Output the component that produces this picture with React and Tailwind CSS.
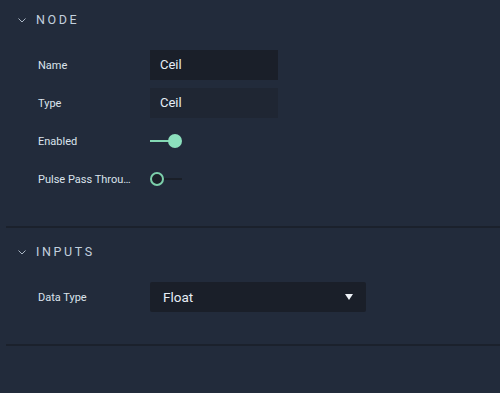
import React from "react";

const font = { fontFamily: "Roboto, 'Noto Sans', sans-serif" };

function Chevron() {
  return (
    <svg width="8" height="5" viewBox="0 0 8 5" className="shrink-0">
      <path d="M0.5 0.5 L4 4 L7.5 0.5" fill="none" stroke="#aab6c4" strokeWidth="1" />
    </svg>
  );
}

function Header({ title }) {
  return (
    <div className="flex items-center h-[14px] pl-[18px]">
      <Chevron />
      <span className="ml-[10px] text-[12.5px] tracking-[2.6px] text-[#c3d0de] font-normal leading-none">{title}</span>
    </div>
  );
}

function Row({ label, children }) {
  return (
    <div className="flex items-center h-[30px]">
      <div className="w-[150px] pl-[38px] pr-[16px] shrink-0 text-[11px] text-[#dbe3ec] truncate leading-none">{label}</div>
      {children}
    </div>
  );
}

export default function App() {
  return (
    <div className="w-[500px] h-[393px] bg-[#222b3b] overflow-hidden" style={font}>
      <div className="pt-[13px]">
        <Header title="NODE" />
        <div className="mt-[23px] flex flex-col gap-[8px]">
          <Row label="Name">
            <div className="w-[128px] h-[30px] bg-[#1a1f29] flex items-center pl-[10px] text-[13px] text-[#e6edf5]">Ceil</div>
          </Row>
          <Row label="Type">
            <div className="w-[128px] h-[30px] bg-[#1f2633] flex items-center pl-[10px] text-[13px] text-[#e6edf5]">Ceil</div>
          </Row>
          <Row label="Enabled">
            <div className="relative w-[32px] h-[14px] flex items-center">
              <div className="h-[2px] w-[20px] bg-[#84d9b4]" />
              <div className="absolute left-[18px] top-0 w-[14px] h-[14px] rounded-full bg-[#8ce0bd]" />
            </div>
          </Row>
          <Row label="Pulse Pass Through">
            <div className="relative w-[32px] h-[14px] flex items-center">
              <div className="absolute left-[12px] h-[2px] w-[20px] bg-[#1a1f28]" />
              <div className="absolute left-0 top-0 w-[14px] h-[14px] rounded-full border-2 border-[#7ccfab] bg-[#1b2029]" />
            </div>
          </Row>
        </div>
      </div>
      <div className="mt-[32px] ml-[6px] h-[2px] bg-[#1b212c]" />
      <div className="pt-[17px]">
        <Header title="INPUTS" />
        <div className="mt-[23px]">
          <Row label="Data Type">
            <div className="w-[216px] h-[30px] bg-[#1a1f29] rounded-[2px] flex items-center justify-between pl-[13px] pr-[13px] text-[13.5px] text-[#e6edf5]">
              <span>Float</span>
              <svg width="8" height="6" viewBox="0 0 8 6"><path d="M0 0 H8 L4 6 Z" fill="#eef2f7" /></svg>
            </div>
          </Row>
        </div>
      </div>
      <div className="mt-[32px] ml-[6px] h-[2px] bg-[#1b212c]" />
    </div>
  );
}
